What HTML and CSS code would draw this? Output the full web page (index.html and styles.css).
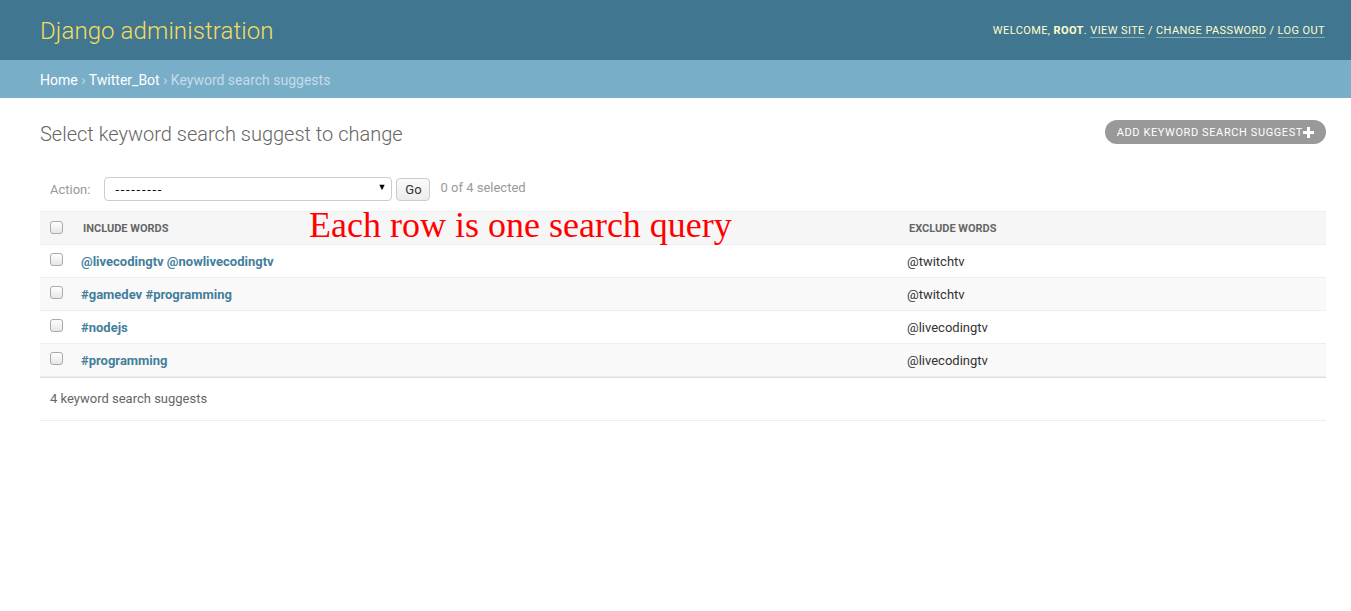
FILE: index.html
```html
<!DOCTYPE html>
<html>
<head>
<meta charset="utf-8">
<link rel="stylesheet" href="styles.css">
</head>
<body>
<div class="header">
  <div class="branding">Django administration</div>
  <div class="user-tools">Welcome, <strong>root</strong>. <a href="#">View site</a> / <a href="#">Change password</a> / <a href="#">Log out</a></div>
</div>
<div class="breadcrumbs"><a href="#">Home</a> › <a href="#">Twitter_Bot</a> › Keyword search suggests</div>
<div class="content">
  <div class="title-row">
    <h1>Select keyword search suggest to change</h1>
    <a class="addlink" href="#">Add keyword search suggest<svg width="11" height="11" viewBox="0 0 11 11"><path d="M4 0h3v4h4v3H7v4H4V7H0V4h4z" fill="#fff"/></svg></a>
  </div>
  <div class="changelist">
    <div class="actions">
      <label>Action:</label>
      <div class="select">---------<span class="arrow">▼</span></div>
      <button class="go">Go</button>
      <span class="counter">0 of 4 selected</span>
    </div>
    <div class="table-wrap">
      <table>
        <thead>
          <tr><th class="cb"><span class="box"></span></th><th class="inc">Include words</th><th class="exc">Exclude words</th></tr>
        </thead>
        <tbody>
          <tr><td class="cb"><span class="box"></span></td><th class="inc"><a href="#">@livecodingtv @nowlivecodingtv</a></th><td>@twitchtv</td></tr>
          <tr class="alt"><td class="cb"><span class="box"></span></td><th class="inc"><a href="#">#gamedev #programming</a></th><td>@twitchtv</td></tr>
          <tr><td class="cb"><span class="box"></span></td><th class="inc"><a href="#">#nodejs</a></th><td>@livecodingtv</td></tr>
          <tr class="alt"><td class="cb"><span class="box"></span></td><th class="inc"><a href="#">#programming</a></th><td>@livecodingtv</td></tr>
        </tbody>
      </table>
      <div class="annotation">Each row is one search query</div>
    </div>
    <p class="paginator">4 keyword search suggests</p>
  </div>
</div>
</body>
</html>
```
FILE: styles.css
```css
* { box-sizing: border-box; }
body { margin: 0; font-family: Roboto, "Liberation Sans", sans-serif; font-size: 14px; color: #333; background: #fff; }
a { text-decoration: none; }
.header { height: 60px; background: #417690; display: flex; align-items: center; justify-content: space-between; padding: 0 26px 0 40px; }
.branding { color: #f5dd5d; font-size: 24px; font-weight: 300; letter-spacing: 0.1px; margin-top: 1px; }
.user-tools { color: #ffc; font-size: 11px; text-transform: uppercase; letter-spacing: 0.4px; }
.user-tools strong { font-weight: 700; }
.user-tools a { color: #ffc; border-bottom: 1px solid rgba(255,255,204,0.4); }
.breadcrumbs { height: 38px; background: #79aec8; color: #c4dce8; padding: 2px 40px 0; display: flex; align-items: center; font-size: 14px; white-space: pre; }
.breadcrumbs a { color: #fff; }
.content { padding: 20px 25px 0 40px; }
.title-row { display: flex; justify-content: space-between; align-items: flex-start; }
h1 { margin: 4px 0 0; font-size: 20px; font-weight: 300; color: #666; }
.addlink { display: flex; align-items: center; height: 24px; margin-top: 2px; background: #999; color: #fff; border-radius: 15px; padding: 0 12px; font-size: 11px; text-transform: uppercase; letter-spacing: 0.6px; }
.addlink svg { margin-left: 0; }
.changelist { margin-top: 31px; }
.actions { display: flex; align-items: center; padding: 0 10px; height: 24px; color: #999; font-size: 13px; }
.actions label { margin-right: 14px; }
.select { position: relative; width: 288px; height: 24px; border: 1px solid #ccc; border-radius: 4px; color: #000; font-size: 13px; padding: 0 10px; display: flex; align-items: center; letter-spacing: 1.7px; }
.select .arrow { position: absolute; right: 5px; top: 4px; font-size: 9px; letter-spacing: 0; }
.go { margin-left: 4px; height: 23px; width: 34px; border: 1px solid #ccc; border-radius: 4px; background: linear-gradient(#fafafa, #ececec); font-family: Roboto, sans-serif; font-size: 13px; color: #333; padding: 0; }
.counter { margin-left: 10px; font-size: 13px; color: #999; margin-top: -3px; }
.table-wrap { position: relative; margin-top: 10px; }
table { width: 100%; border-collapse: collapse; border-bottom: 1px solid #ddd; }
thead th { background: #f6f6f6; border-top: 1px solid #eee; border-bottom: 1px solid #eee; height: 33px; text-align: left; font-size: 11px; font-weight: 700; text-transform: uppercase; color: #666; padding: 0 10px; }
thead th.cb { width: 31px; padding: 0 0 0 10px; }
thead th.inc { width: 826px; padding-left: 12px; }
thead th.exc { padding-left: 12px; }
tbody td, tbody th { height: 33px; border-bottom: 1px solid #eee; font-size: 13px; padding: 0 10px; text-align: left; vertical-align: middle; }
tbody td.cb { padding: 0 0 4px 10px; }
tbody th.inc { padding-left: 10px; }
tbody th a { color: #447e9b; font-weight: 700; }
tbody td { color: #333; }
tbody tr.alt td, tbody tr.alt th { background: #f9f9f9; }
.box { display: block; width: 13px; height: 13px; border: 1px solid #aaa; border-radius: 3px; background: linear-gradient(#fff, #e6e6e6); }
thead .box { margin-top: -2px; }
.annotation { position: absolute; left: 269px; top: -7px; font-family: "Liberation Serif", serif; font-size: 36px; color: #f00; line-height: 1.2; }
.paginator { margin: 0; font-size: 13px; color: #666; padding: 10px; line-height: 22px; border-top: 1px solid #ddd; border-bottom: 1px solid #eee; height: 44px; }
```
